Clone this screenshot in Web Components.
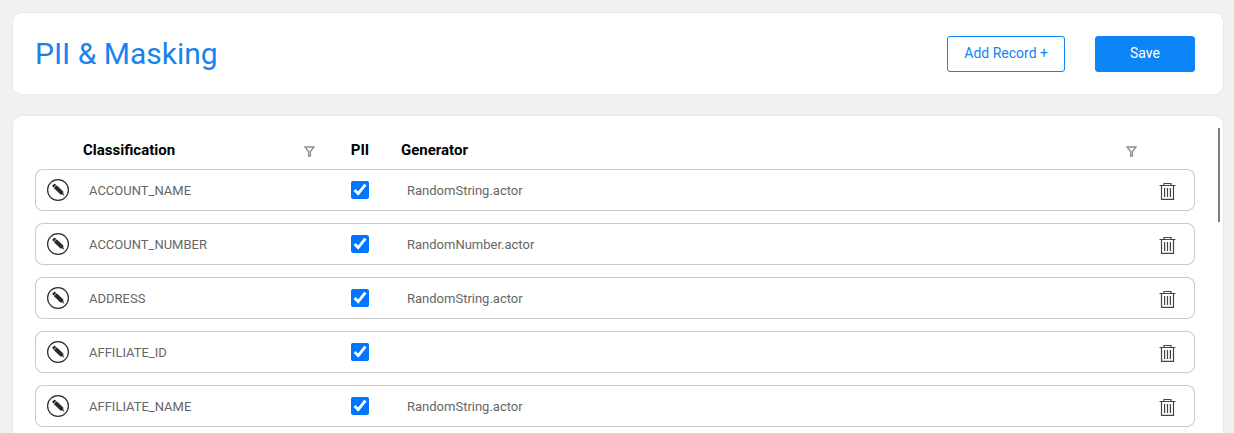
<!DOCTYPE html>
<html lang="en">
<head>
<meta charset="utf-8">
<title>PII &amp; Masking</title>
<style>
    body {
        --accent: #0d84f7;
        --line: #c9cbcb;
        margin: 0;
        background: #f1f1f1;
        font-family: Roboto, "Liberation Sans", sans-serif;
    }
</style>
</head>
<body>
<pii-page>
    <page-header slot="header">
        <span slot="title">PII &amp; Masking</span>
        <action-button slot="actions">Add Record +</action-button>
        <action-button slot="actions" primary>Save</action-button>
    </page-header>
    <scroll-panel>
        <record-table></record-table>
    </scroll-panel>
</pii-page>

<script>
const RECORDS = [
    { name: 'ACCOUNT_NAME', pii: true, generator: 'RandomString.actor' },
    { name: 'ACCOUNT_NUMBER', pii: true, generator: 'RandomNumber.actor' },
    { name: 'ADDRESS', pii: true, generator: 'RandomString.actor' },
    { name: 'AFFILIATE_ID', pii: true, generator: '' },
    { name: 'AFFILIATE_NAME', pii: true, generator: 'RandomString.actor' }
];

const ICONS = {
    edit: {
        size: [22, 22],
        body: `<circle cx="11" cy="11" r="10.4" fill="none" stroke="#2b2b2b" stroke-width="1.2"/>
            <path fill="#2b2b2b" d="M5.4 6.6 L7 5 Q7.6 4.5 8.2 5.1 L9.2 6 L6.6 8.6 L5.6 7.6 Q5 7 5.4 6.6Z
                M9.7 6.2 L16.3 12.4 L16.4 15.4 L13.4 15.4 L6.8 9Z M15.8 15.9 L16.6 15.1 L17.4 16.7Z"/>`
    },
    filter: {
        size: [11, 11],
        body: `<path fill="none" stroke="#8d8d8d" stroke-width="1.3" d="M1 1 H10 L6.4 5.5 V10 H4.6 V5.5 Z"/>`
    },
    trash: {
        size: [17, 18],
        body: `<g fill="none" stroke="#454545">
            <path stroke-width="1.2" d="M5 3 V1.5 H12 V3 M.5 3.5 H16.5"/>
            <path stroke-width="1.2" d="M2.5 3.5 V17.3 H14.5 V3.5"/>
            <path stroke-width="1.2" d="M5.6 6 V15 M8.5 6 V15 M11.4 6 V15"/></g>`
    }
};

class AppIcon extends HTMLElement {
    connectedCallback() {
        const icon = ICONS[this.getAttribute('name')];
        const [w, h] = icon.size;
        this.attachShadow({ mode: 'open' }).innerHTML = `
            <style>
                :host { display: block; }
                svg { display: block; }
            </style>
            <svg width="${w}" height="${h}" viewBox="0 0 ${w} ${h}" aria-hidden="true">${icon.body}</svg>
        `;
    }
}
customElements.define('app-icon', AppIcon);

class ActionButton extends HTMLElement {
    constructor() {
        super();
        this.attachShadow({ mode: 'open' }).innerHTML = `
            <style>
                :host { display: block; }
                button {
                    height: 36px;
                    min-width: 100px;
                    padding: 0 16px 2px;
                    border: 1px solid var(--accent);
                    border-radius: 3px;
                    background: #fff;
                    color: var(--accent);
                    font: 400 14px/20px Roboto, "Liberation Sans", sans-serif;
                    cursor: pointer;
                }
                :host([primary]) button { background: var(--accent); color: #fff; }
            </style>
            <button type="button"><slot></slot></button>
        `;
    }
}
customElements.define('action-button', ActionButton);

class PageHeader extends HTMLElement {
    constructor() {
        super();
        this.attachShadow({ mode: 'open' }).innerHTML = `
            <style>
                :host {
                    display: flex;
                    align-items: center;
                    justify-content: space-between;
                    padding: 23px 28px 22px 22px;
                    border: 1px solid #e9e9e9;
                    border-radius: 10px;
                    background: #fff;
                }
                h1 { margin: 0; color: #1a82f0; font-size: 30px; line-height: 36px; font-weight: 400; }
                .actions { display: flex; gap: 30px; }
            </style>
            <h1><slot name="title"></slot></h1>
            <div class="actions"><slot name="actions"></slot></div>
        `;
    }
}
customElements.define('page-header', PageHeader);

class ScrollPanel extends HTMLElement {
    constructor() {
        super();
        this.attachShadow({ mode: 'open' }).innerHTML = `
            <style>
                :host {
                    display: block;
                    position: relative;
                    flex: 1;
                    min-height: 0;
                    overflow: hidden;
                    padding: 15px 28px 0 22px;
                    border: 1px solid #e9e9e9;
                    border-bottom: 0;
                    border-radius: 10px 10px 0 0;
                    background: #fff;
                }
                /* thin thumb over the panel's right edge */
                .thumb {
                    position: absolute;
                    top: 12px;
                    right: 3px;
                    width: 2px;
                    height: 94px;
                    background: #7b7d80;
                }
            </style>
            <slot></slot>
            <div class="thumb"></div>
        `;
    }
}
customElements.define('scroll-panel', ScrollPanel);

class RecordTable extends HTMLElement {
    constructor() {
        super();
        this.attachShadow({ mode: 'open' });
    }

    connectedCallback() { this.render(); }

    render() {
        const rows = RECORDS.map(r => `
            <tr>
                <td><button type="button" aria-label="Edit ${r.name}"><app-icon name="edit"></app-icon></button></td>
                <td>${r.name}</td>
                <td class="check"><input type="checkbox" aria-label="PII ${r.name}" ${r.pii ? 'checked' : ''}></td>
                <td>${r.generator}</td>
                <td class="remove"><button type="button" aria-label="Delete ${r.name}"><app-icon name="trash"></app-icon></button></td>
            </tr>`).join('');

        this.shadowRoot.innerHTML = `
            <style>
                :host { display: block; }
                table { width: 100%; table-layout: fixed; border-collapse: separate; border-spacing: 0 12px; }
                .edit-col { width: 42px; }
                .name-col { width: 248px; }
                .pii-col { width: 70px; }
                .remove-col { width: 48px; }

                th {
                    padding: 0 10px 0 6px;
                    color: #000;
                    font-size: 15px;
                    line-height: 14px;
                    font-weight: 700;
                    text-align: left;
                }
                th.check { padding: 0; text-align: center; }
                .head { display: flex; align-items: flex-end; justify-content: space-between; }

                td {
                    box-sizing: border-box;
                    height: 42px;
                    padding: 2px 12px 0;
                    border: solid var(--line);
                    border-width: 1px 0;
                    color: #666;
                    font-size: 13px;
                    line-height: 20px;
                }
                td:first-child { padding: 0 0 0 11px; border-left-width: 1px; border-radius: 8px 0 0 8px; }
                td:last-child { padding: 2px 18px 0 0; border-right-width: 1px; border-radius: 0 8px 8px 0; }
                td.check { padding: 0; }
                td.remove button { margin-left: auto; }

                button { display: block; padding: 0; border: 0; background: none; cursor: pointer; }
                input {
                    display: block;
                    width: 18px;
                    height: 18px;
                    margin: 0 auto;
                    accent-color: #0075ff;
                }
            </style>
            <table>
                <colgroup>
                    <col class="edit-col"><col class="name-col"><col class="pii-col"><col><col class="remove-col">
                </colgroup>
                <thead>
                    <tr>
                        <th></th>
                        <th><div class="head">Classification
                            <button type="button" aria-label="Filter classification"><app-icon name="filter"></app-icon></button></div></th>
                        <th class="check">PII</th>
                        <th><div class="head">Generator
                            <button type="button" aria-label="Filter generator"><app-icon name="filter"></app-icon></button></div></th>
                        <th></th>
                    </tr>
                </thead>
                <tbody>${rows}</tbody>
            </table>
        `;
    }
}
customElements.define('record-table', RecordTable);

class PiiPage extends HTMLElement {
    constructor() {
        super();
        this.attachShadow({ mode: 'open' }).innerHTML = `
            <style>
                :host {
                    display: flex;
                    flex-direction: column;
                    gap: 20px;
                    box-sizing: border-box;
                    height: 100vh;
                    padding: 12px 10px 0 12px;
                    overflow: hidden;
                }
            </style>
            <slot name="header"></slot>
            <slot></slot>
        `;
    }
}
customElements.define('pii-page', PiiPage);
</script>
</body>
</html>
